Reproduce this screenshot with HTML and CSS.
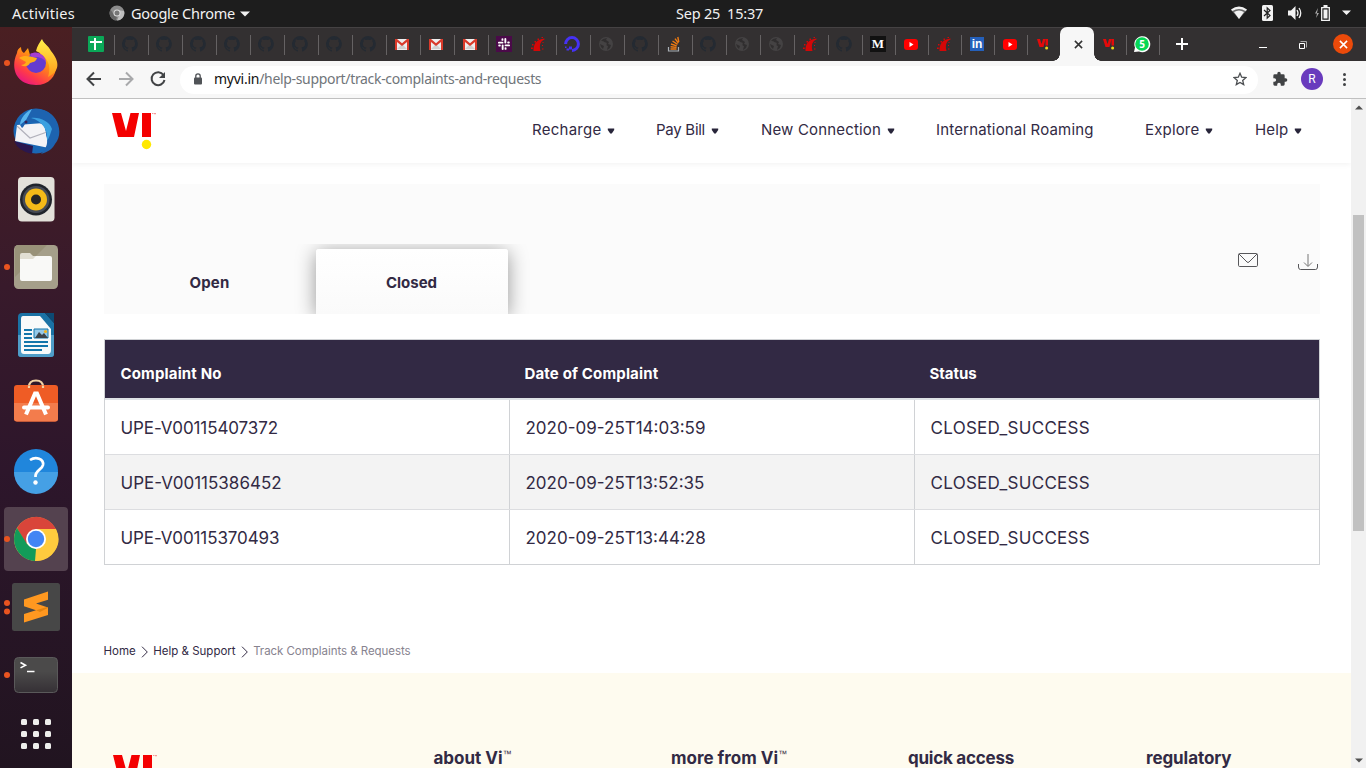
FILE: index.html
```html
<!DOCTYPE html>
<html lang="en">
<head>
<meta charset="utf-8">
<title>Track Complaints</title>
<link rel="stylesheet" href="styles.css">
</head>
<body>
<svg class="defs" aria-hidden="true">
  <symbol id="github" viewBox="0 0 16 16"><path fill="#242a32" d="M8 0a8 8 0 0 0-2.500 15.600c.4.1.5-.2.5-.4v-1.500c-2.200.5-2.700-.9-2.700-.9-.4-.9-.9-1.200-.9-1.200-.7-.5.1-.5.1-.5.8.1 1.200.8 1.200.8.7 1.200 1.900.9 2.300.7.1-.5.3-.9.5-1.100-1.800-.2-3.600-.9-3.600-4 0-.9.3-1.600.8-2.100-.1-.2-.4-1 .1-2.100 0 0 .7-.2 2.200.8a7.600 7.600 0 0 1 4 0c1.500-1 2.200-.8 2.200-.8.4 1.100.2 1.900.1 2.100.5.6.8 1.300.8 2.100 0 3.100-1.900 3.700-3.700 3.900.3.3.6.8.6 1.500v2.200c0 .2.1.5.6.4A8 8 0 0 0 8 0z"/></symbol>
  <symbol id="gmail" viewBox="0 0 16 16"><path fill="#eee" d="M1 3h14v11H1z"/><path fill="#d0d0d0" d="M3 13l5-5 5 5z"/><path fill="#d93a2b" d="M1 3h2l5 4.300L13 3h2v11h-2V6L8 10 3 6v8H1z"/></symbol>
  <symbol id="slack" viewBox="0 0 16 16"><path fill="#4a0a49" d="M0 0h16v16H0z"/><g fill="#fff"><rect x="2" y="5.700" width="5.400" height="1.900" rx=".9"/><rect x="5.500" y="2.200" width="1.900" height="2.600" rx=".9"/><rect x="8.400" y="2" width="1.900" height="5.400" rx=".9"/><rect x="11.200" y="5.500" width="2.600" height="1.900" rx=".9"/><rect x="8.600" y="8.400" width="5.400" height="1.900" rx=".9"/><rect x="8.600" y="11.200" width="1.900" height="2.600" rx=".9"/><rect x="5.700" y="8.600" width="1.900" height="5.400" rx=".9"/><rect x="2.200" y="8.600" width="2.600" height="1.900" rx=".9"/></g></symbol>
  <symbol id="rails" viewBox="0 0 16 16"><path fill="#d40707" d="M3.500 15c-.5-7 3.500-12 11-12.500v1C10.500 5 9 9 10.500 15zM1 11.500h1.800V13H1zM2 8h1.500v1.500H2zM4.500 5H6v1.500H4.500zM7.500 2.500H9V4H7.500zM11.500 1H13v1h-1.500zM12 9h1v1h-1zM12 12.500h1.500v1H12zM12.500 6h1v1h-1z"/></symbol>
  <symbol id="ocean" viewBox="0 0 16 16"><path fill="none" stroke="#4632f5" stroke-width="3" d="M8 14.400A6.400 6.400 0 1 0 1.600 8"/><path fill="#4632f5" d="M5 10.500h3v3H5zM2.500 12.500H5v2H2.500zM1 10.500h1.500V12H1z"/></symbol>
  <symbol id="globe" viewBox="0 0 16 16"><circle cx="8" cy="8" r="7" fill="#444243"/><path fill="#302e2f" d="M3 5c3-.5 3 1.500 5 1.500S7 10 10 10l-1 4 3-2 1-3-3-1 1-2-3-2 1-2-4 1zM2 8l4 2-1 3-2-2z"/></symbol>
  <symbol id="overflow" viewBox="0 0 16 16"><path fill="none" stroke="#a9afb5" stroke-width="1.200" d="M2.500 11v4h10v-4"/><path stroke="#f07b12" stroke-width="1.400" d="M4.500 13h6M4.600 10.700l6 .7M5 8l5.700 1.800M6.500 5l5 3.400M9 2.600l3.400 4.600M11.800 1l1 5"/></symbol>
  <symbol id="youtube" viewBox="0 0 16 16"><rect x="1" y="3" width="14" height="11" rx="3" fill="#f00"/><path fill="#fff" d="M6.500 6v5L10.500 8.500z"/></symbol>
  <symbol id="vi" viewBox="0 0 44 38"><path fill="#f40000" d="M0 0h9l5 18L18.500 0H27l-5 24H6zM30 0h9v24h-9z"/><circle cx="34.500" cy="31.500" r="4.700" fill="#ffe800"/><path fill="#f69a9a" d="M40 0h1.500v1H40zM42 0h2v1.200h-2z"/></symbol>
  <symbol id="vismall" viewBox="0 0 16 16"><path fill="#e30a0a" d="M2 3h3l1.500 5L8 3h2.500L8.500 11h-4zM10.500 3H13v6.500h-2.500z"/><circle cx="11.600" cy="12" r="1.500" fill="#ebd914"/></symbol>
  <symbol id="close" viewBox="0 0 10 10"><path stroke="currentColor" stroke-width="1.700" d="M1 1l8 8M9 1L1 9"/></symbol>
  <symbol id="caret" viewBox="0 0 8 6"><path fill="#28253a" d="M.8.5h6.400V2L4.800 5.500H3.200L.8 2z"/></symbol>
  <symbol id="chev" viewBox="0 0 8 12"><path fill="none" stroke="#322a44" d="M1 .7L6.300 6 1 11.300"/></symbol>
</svg>

<header class="topbar">
  <span class="activities">Activities</span>
  <svg class="app-icon" viewBox="0 0 16 16"><circle cx="8" cy="8" r="7.500" fill="#8c8c8c"/><path fill="#bebebe" d="M15 6a7.500 7.500 0 0 1-7 9.500L11.200 8 8 5z"/><path fill="#666" d="M1.500 4.500L5 10l3 1.500-1 4A7.500 7.500 0 0 1 1.500 4.500z"/><circle cx="8" cy="8" r="3.500" fill="#ddd"/><circle cx="8" cy="8" r="2.500" fill="#777"/></svg>
  <span class="appname">Google Chrome</span>
  <svg class="tri" viewBox="0 0 10 6"><path fill="#f2f2f2" d="M0 .5h10L5 5.500z"/></svg>
  <span class="clock">Sep 25&nbsp; 15:37</span>
  <svg class="tray" viewBox="0 0 130 20"><path fill="#6a6a6a" d="M1 7Q9 1 17 7L9 16z"/><path fill="#f2f2f2" d="M1 6.500Q9 .5 17 6.500L15.500 8Q9 3.800 2.500 8zM4 9Q9 6 14 9L9 16z"/><rect x="32" y="2" width="11" height="16" rx="1.500" fill="#f2f2f2"/><path fill="none" stroke="#222" stroke-width="1.200" d="M34 7l6 5.500-2.800 2.700V4.800L40 7.500 34 13"/><path fill="#f2f2f2" d="M58 7.500h3L65.500 3v14L61 12.500h-3z"/><path fill="none" stroke="#f2f2f2" stroke-width="1.300" d="M67 7q2 3 0 6M69 5q3.500 5 0 10"/><path fill="#aaa" d="M88 5l-3 5.500h2L86 15l3-5h-2z"/><path fill="none" stroke="#f2f2f2" stroke-width="1.300" d="M91.700 4.700h7.600v12.600h-7.600z"/><path fill="#f2f2f2" d="M93.500 6.500h4v9h-4zM93.500 2h4v2h-4zM112 7.500h9L116.500 12z"/></svg>
</header>

<div class="desktop">
  <nav class="dock">
    <div class="app one"><svg viewBox="0 0 48 48"><defs><linearGradient id="ff" x1=".8" y1="0" x2=".2" y2="1"><stop offset="0" stop-color="#fff44f"/><stop offset=".4" stop-color="#ff980e"/><stop offset=".75" stop-color="#ff3b48"/><stop offset="1" stop-color="#e3108d"/></linearGradient><linearGradient id="fy" x1="0" y1="0" x2="0" y2="1"><stop offset="0" stop-color="#fff14a"/><stop offset="1" stop-color="#ff9a1a"/></linearGradient></defs><path fill="url(#ff)" d="M29 1c5 5 7 7 9 11 12 13 6 34-14 34C4 46-2 29 5 14c0-3 2-5 4-6 0 3 1 5 3 6l4-5 2 7c5-1 8-1 10 0z"/><circle cx="24" cy="24" r="10" fill="#643bd0"/><path fill="#a53ed2" d="M18 15c7-4 15 0 16 8-4-5-7-5-14-5z"/><path fill="url(#fy)" d="M24 12c1-5 4-9 6-12 2 5 6 6 9 12 9 11 9 20-3 26 4-12-1-21-12-26z"/><path fill="#ffad18" d="M7 19c5-3 9-2 18 0-1 4-4 4-7 5-2 4-6 4-9 2 4 0 5-3 5-3z"/></svg></div>
    <div class="app"><svg viewBox="0 0 48 48"><circle cx="24" cy="24" r="22.500" fill="#1a67b5"/><path fill="#2a174f" d="M2 34l19 5-1 8Q6 44 2 34z"/><path fill="#f3f3f6" d="M5 18l27-2 5 25L3 34z"/><path fill="none" stroke="#b1b1bb" stroke-width="1.200" d="M5 19l13 12 17-6"/><path fill="#1d63b0" d="M8 18C8 6 20-2 34 4c12 5 18 22 9 33-3 6-8 8-14 10 7-7 7-13 5-20 1-12-10-13-19-12-3 2-3 5-5 6z"/><path fill="#3ba0e0" d="M19 11c9-1 18 3 21 11-2 6-3 9-5 12 1-12-5-20-16-23z"/><path fill="#58b5ed" d="M20 2c-6 3-12 9-12 16l6-5z"/><circle cx="14" cy="15" r="1.500" fill="#342255"/></svg></div>
    <div class="app"><svg viewBox="0 0 48 48"><rect x="6" y="2" width="36.500" height="44.500" rx="4" fill="#e3e1da"/><circle cx="24" cy="24.500" r="16" fill="#20242b"/><circle cx="24" cy="24.500" r="13.500" fill="#464b55"/><circle cx="24" cy="24.500" r="11" fill="#f4ba18"/><circle cx="24" cy="24.500" r="5" fill="#262626"/></svg></div>
    <div class="app one"><svg viewBox="0 0 48 48"><rect x="2" y="2" width="44" height="44" rx="4.500" fill="#a59f8a"/><path fill="#999279" d="M6 2h29L3 34V6q0-4 3-4z"/><path fill="#e1ded3" d="M8 12q0-2 2-2h8l3 3h3v5H8z"/><path fill="#f9f9f7" d="M8 16h13l3-3h14q2 0 2 2v21q0 2-2 2H10q-2 0-2-2z"/></svg></div>
    <div class="app"><svg viewBox="0 0 48 48"><path fill="#1a72a5" d="M10 2h23l9 10v31q0 3-3 3H9q-3 0-3-3V6q0-4 4-4z"/><path fill="#4f9dc8" d="M6 24h36v19q0 3-3 3H9q-3 0-3-3z"/><path fill="#0c4a74" d="M33 2h9v10z"/><path fill="#f8fafa" d="M11 5h17l11 13v21q0 4-3 4H12q-3 0-3-3V8q0-3 2-3z"/><path stroke="#1376ab" stroke-width="2" d="M12 19h8M12 23h8M12 27h8M12 31h24M12 35h24M12 39h18"/><path fill="#95c9e8" stroke="#1376ab" d="M22 18h14v9H22z"/><path fill="#3b444b" d="M23 27l4-6 3 3 2-2 4 5z"/><circle cx="33.500" cy="20.500" r="1.600" fill="#f3b31e"/></svg></div>
    <div class="app"><svg viewBox="0 0 48 48"><path fill="none" stroke="#f3d3a5" stroke-width="2.200" d="M17 9V8q0-6.500 7-6.500T31 8v1"/><rect x="2" y="6" width="44" height="36.500" rx="3" fill="#ef5c25"/><path fill="#f37c4c" d="M2 24h44v15.500q0 3-3 3H5q-3 0-3-3z"/><path fill="none" stroke="#f3d3a5" stroke-width="2.200" d="M17 9V6.500M31 9V6.500"/><path fill="none" stroke="#fff" stroke-width="4" d="M14 35.500l9-21h2l9 21"/><path stroke="#fff" stroke-width="4" stroke-linecap="round" d="M12 28.500h24"/></svg></div>
    <div class="app"><svg viewBox="0 0 48 48"><circle cx="24" cy="24" r="22" fill="#2086dc"/><path fill="#45a0e5" d="M2 25h44a22 22 0 0 1-44 0z"/><path fill="none" stroke="#fff" stroke-width="2.700" d="M18 13c6-4 14-1 13 5-1 5-8 5-7.500 12"/><circle cx="23.500" cy="35.500" r="2.200" fill="#fff"/></svg></div>
    <div class="app one active"><svg viewBox="0 0 48 48"><circle cx="24" cy="24" r="22" fill="#fecb3e"/><path fill="#d9453a" d="M5 13a22 22 0 0 1 39 1H24L14 29z"/><path fill="#129b59" d="M5 13l10 16 9 5-1 12A22 22 0 0 1 5 13z"/><path fill="#fecb3e" d="M23 46l10-17-4-15h15A22 22 0 0 1 23 46z"/><circle cx="24" cy="24" r="10" fill="#fff"/><circle cx="24" cy="24" r="8.200" fill="#4285f4"/></svg></div>
    <div class="app two"><svg viewBox="0 0 48 48"><rect width="48" height="48" rx="2.500" fill="#474747"/><path fill="#ff9820" d="M12 16.500L36 8.500v8.200L24 20.500l12 4v7.500L12 39.500V31l12-3.800-12-4z"/><path fill="#e4830f" d="M24 27.200l11-3.200.7 1-7.700 4z"/></svg></div>
    <div class="app one"><svg viewBox="0 0 48 48"><defs><linearGradient id="tm" x1="0" y1="0" x2="0" y2="1"><stop offset=".4" stop-color="#4b4a4a"/><stop offset="1" stop-color="#353035"/></linearGradient></defs><rect x="2.500" y="6.500" width="43" height="35" rx="4" fill="url(#tm)" stroke="#5a595a"/><path fill="none" stroke="#fff" stroke-width="1.600" d="M8.500 11.500l5 2.700-5 2.700M15 20.500h7.500"/></svg></div>
    <div class="grid"><i></i><i></i><i></i><i></i><i></i><i></i><i></i><i></i><i></i></div>
  </nav>

  <main class="browser">
    <div class="tabstrip">
      <div class="tab"><svg viewBox="0 0 16 16"><rect width="16" height="16" rx="1" fill="#0aa858"/><path stroke="#fff" stroke-width="2" d="M2 6h12M7 2v12"/></svg></div>
      <div class="tab"><svg><use href="#github"/></svg></div><div class="tab"><svg><use href="#github"/></svg></div><div class="tab"><svg><use href="#github"/></svg></div><div class="tab"><svg><use href="#github"/></svg></div><div class="tab"><svg><use href="#github"/></svg></div><div class="tab"><svg><use href="#github"/></svg></div><div class="tab"><svg><use href="#github"/></svg></div><div class="tab"><svg><use href="#github"/></svg></div>
      <div class="tab"><svg><use href="#gmail"/></svg></div><div class="tab"><svg><use href="#gmail"/></svg></div><div class="tab"><svg><use href="#gmail"/></svg></div>
      <div class="tab"><svg><use href="#slack"/></svg></div><div class="tab"><svg><use href="#rails"/></svg></div><div class="tab"><svg><use href="#ocean"/></svg></div><div class="tab"><svg><use href="#globe"/></svg></div><div class="tab"><svg><use href="#github"/></svg></div><div class="tab"><svg><use href="#overflow"/></svg></div><div class="tab"><svg><use href="#github"/></svg></div><div class="tab"><svg><use href="#globe"/></svg></div><div class="tab"><svg><use href="#globe"/></svg></div><div class="tab"><svg><use href="#rails"/></svg></div><div class="tab"><svg><use href="#github"/></svg></div>
      <div class="tab n medium"><b>M</b></div><div class="tab n"><svg><use href="#youtube"/></svg></div><div class="tab n"><svg><use href="#rails"/></svg></div><div class="tab n linkedin"><b>in</b></div><div class="tab n"><svg><use href="#youtube"/></svg></div>
      <div class="tab last"><svg><use href="#vismall"/></svg></div>
      <div class="tab-active"><svg><use href="#close"/></svg></div>
      <div class="tab n"><svg><use href="#vismall"/></svg></div>
      <div class="tab n"><svg viewBox="0 0 16 16"><path fill="#fff" d="M0 16L1 11.500A8 8 0 1 1 5 15.500z"/><circle cx="8" cy="8" r="6.800" fill="#06d755"/><text class="badge" x="8" y="11.800" text-anchor="middle">5</text></svg></div>
      <svg class="plus" viewBox="0 0 12 12"><path stroke="#fff" stroke-width="2" d="M6 0v12M0 6h12"/></svg>
      <svg class="min" viewBox="0 0 8 10"><path stroke="#fff" d="M0 7.500h8"/></svg>
      <svg class="max" viewBox="0 0 10 10"><path stroke="#aaa" fill="none" d="M2.500 1.500h6v6"/><path stroke="#fff" fill="none" d="M1.500 3.500h5v5h-5z"/></svg>
      <span class="quit"><svg><use href="#close"/></svg></span>
    </div>

    <div class="toolbar">
      <svg class="tool" viewBox="0 0 20 20"><path fill="none" stroke="#414345" stroke-width="2" d="M17 10H4M10 3.500L3.500 10l6.500 6.500"/></svg>
      <svg class="tool" viewBox="0 0 20 20"><path fill="none" stroke="#a8a9ab" stroke-width="2" d="M3 10h13M10 3.500l6.500 6.500-6.500 6.500"/></svg>
      <svg class="tool" viewBox="0 0 20 20"><path fill="none" stroke="#414345" stroke-width="2" d="M15.500 6A6.500 6.500 0 1 0 16.500 11"/><path fill="#414345" d="M17 3v6h-6z"/></svg>
      <div class="omnibox">
        <svg class="lock" viewBox="0 0 8 12"><rect y="4.500" width="8" height="7" rx="1" fill="#505357"/><path fill="none" stroke="#505357" stroke-width="1.300" d="M1.800 5V3a2.200 2.200 0 0 1 4.400 0v2"/></svg>
        <div class="url"><span class="host">myvi.in</span><span class="path">/help-support/track-complaints-and-requests</span></div>
        <svg class="star" viewBox="0 0 14 14"><path fill="none" stroke="#4c4f52" stroke-width="1.300" d="M7 1.300l1.700 3.900 4.200.4-3.200 2.800 1 4.200L7 10.400l-3.700 2.200 1-4.200L1.100 5.600l4.200-.4z"/></svg>
      </div>
      <svg class="puzzle" viewBox="0 0 24 24"><path fill="#414345" d="M20.500 11H19V7a2 2 0 0 0-2-2h-4V3.500a2.500 2.500 0 0 0-5 0V5H4a2 2 0 0 0-2 2v3.800h1.500a2.700 2.700 0 0 1 0 5.400H2V20a2 2 0 0 0 2 2h3.800v-1.500a2.700 2.700 0 0 1 5.400 0V22H17a2 2 0 0 0 2-2v-4h1.500a2.500 2.500 0 0 0 0-5z"/></svg>
      <span class="avatar">R</span>
      <span class="dots"><i></i><i></i><i></i></span>
    </div>

    <div class="viewport">
      <div class="page">
        <header class="site-header">
          <svg class="logo"><use href="#vi"/></svg>
          <nav class="menu">
            <a><span class="recharge">Recharge</span><svg><use href="#caret"/></svg></a>
            <a><span class="paybill">Pay Bill</span><svg><use href="#caret"/></svg></a>
            <a><span>New Connection</span><svg><use href="#caret"/></svg></a>
            <a><span>International Roaming</span></a>
            <a><span>Explore</span><svg><use href="#caret"/></svg></a>
            <a><span>Help</span><svg><use href="#caret"/></svg></a>
          </nav>
        </header>

        <section class="panel">
          <div class="switch">
            <div class="opt"><span>Open</span></div>
            <div class="opt sel"><span>Closed</span></div>
          </div>
          <div class="actions">
            <svg class="mail" viewBox="0 0 20 14"><rect x=".5" y=".5" width="19" height="13" rx="1.200" fill="none" stroke="#57575a"/><path fill="none" stroke="#57575a" d="M1 1l8 8q1 1 2 0l8-8"/></svg>
            <svg class="down" viewBox="0 0 20 16"><path fill="none" stroke="#57575a" d="M.5 10v3q0 2.500 2 2.500h15q2 0 2-2.500v-3"/><path fill="none" stroke="#777" d="M10 0v12M6 8.500l4 4 4-4"/></svg>
          </div>
        </section>

        <div class="table">
          <div class="thead"><span>Complaint No</span><span>Date of Complaint</span><span class="status-head">Status</span></div>
          <div class="row"><span class="tight">UPE-V00115407372</span><span>2020-09-25T14:03:59</span><span class="status">CLOSED_SUCCESS</span></div>
          <div class="row alt"><span>UPE-V00115386452</span><span>2020-09-25T13:52:35</span><span class="status">CLOSED_SUCCESS</span></div>
          <div class="row"><span class="tight">UPE-V00115370493</span><span>2020-09-25T13:44:28</span><span class="status">CLOSED_SUCCESS</span></div>
        </div>

        <div class="crumbs">
          <span>Home</span><svg><use href="#chev"/></svg><span>Help &amp; Support</span><svg><use href="#chev"/></svg><span class="current">Track Complaints &amp; Requests</span>
        </div>

        <footer class="footer">
          <svg class="logo"><use href="#vi"/></svg>
          <h4>about Vi<sup>™</sup></h4>
          <h4>more from Vi<sup>™</sup></h4>
          <h4 class="quick">quick access</h4>
          <h4 class="regulatory">regulatory</h4>
        </footer>
      </div>
      <div class="scrollbar"><svg viewBox="0 0 8 5"><path fill="#505050" d="M0 4.500h8L4 .5z"/></svg><div class="thumb"></div><svg viewBox="0 0 8 5"><path fill="#505050" d="M0 .5h8L4 4.500z"/></svg></div>
    </div>
  </main>
</div>
</body>
</html>
```
FILE: styles.css
```css
* { box-sizing: border-box; }
body { margin: 0; width: 1366px; height: 768px; overflow: hidden; font-family: Inter, sans-serif; color: #322a44; }
svg { display: block; flex: none; }
.defs { position: absolute; width: 0; height: 0; }
.topbar { display: flex; align-items: center; height: 27px; padding: 0 0 1px 12px; background: #1d1d1d; color: #f2f2f2; font: 14.500px "Noto Sans", sans-serif; white-space: nowrap; }
.activities { letter-spacing: .258px; }
.app-icon { width: 16px; height: 16px; margin: 0 6px 0 34px; }
.appname { letter-spacing: -.234px; }
.tri { width: 10px; height: 6px; margin: 1px 0 0 5px; }
.clock { margin-left: 426px; letter-spacing: -.232px; }
.tray { width: 130px; height: 20px; margin: 0 6px 0 auto; }
.desktop { display: flex; height: 741px; }
.dock { width: 72px; padding-top: 2px; background: linear-gradient(#4a1f22, #381a2b 35%, #2d162b 60%, #211420); }
.app { position: relative; height: 68px; padding: 10px 12px; }
.app > svg { width: 48px; height: 48px; }
.one::before, .two::before { content: ""; position: absolute; left: 4px; top: 31px; width: 6px; height: 6px; border-radius: 50%; background: #e95420; }
.two::before { top: 27px; box-shadow: 0 8.500px #e95420; }
.active { margin: 2px 4px; height: 64px; padding: 8px; border-radius: 4px; background: #54424f; }
.active::before { left: 0; top: 29px; }
.grid { display: grid; grid-template-columns: repeat(3, 6px); gap: 6px; padding: 10px 21px; }
.grid i { height: 6px; border-radius: 1.500px; background: #eeeeec; }
.browser { flex: 1; }
.tabstrip { display: flex; align-items: center; height: 34px; padding-left: 9px; background: #333031; border-top: 1px solid #454243; }
.tab { width: 34px; height: 20px; padding: 1px 0 0 7px; border-right: 1px solid #656263; }
.tab svg { width: 16px; height: 16px; overflow: visible; }
.tab.n { width: 33px; }
.tab.last { width: 32px; border: 0; }
.tab-active { position: relative; display: grid; place-items: center; width: 34px; height: 34px; margin-top: -1px; border-radius: 7px 7px 0 0; background: #f7f7f7; color: #333; }
.tab-active svg { width: 9px; height: 9px; margin-left: 2px; }
.tab-active::before, .tab-active::after { content: ""; position: absolute; bottom: 0; left: -7px; width: 7px; height: 7px; background: radial-gradient(circle at 0 0, transparent 6.500px, #f7f7f7 7px); }
.tab-active::after { left: auto; right: -7px; background: radial-gradient(circle at 100% 0, transparent 6.500px, #f7f7f7 7px); }
.tab b { display: block; width: 16px; height: 16px; color: #fff; text-align: center; }
.medium b { background: #111; font: bold 13px/16px "Liberation Serif", serif; }
.linkedin b { width: 14px; height: 14px; margin: 1px; background: #2560ba; font: bold 12px/14px "Liberation Sans", sans-serif; }
.badge { fill: #fff; font: bold 10px "Noto Sans", sans-serif; }
.plus { width: 12px; height: 12px; margin: -1px 0 0 16px; }
.min { width: 8px; height: 10px; margin-left: 71px; }
.max { width: 10px; height: 10px; margin-left: 31px; }
.quit { display: grid; place-items: center; width: 20px; height: 20px; margin: -1px 0 0 25px; border-radius: 50%; background: #eb4a0a; color: #fff; }
.quit svg { width: 9px; height: 9px; }
.toolbar { display: flex; align-items: center; height: 38px; padding: 0 14px 1px 12px; background: #f7f7f7; border-bottom: 1px solid #c0c0c0; }
.tool { width: 20px; height: 20px; margin-right: 12px; }
.omnibox { display: flex; align-items: center; width: 1078px; height: 28px; padding: 0 11px 0 14px; border-radius: 14px; background: #fff; margin-top: 1px; }
.lock { width: 8px; height: 12px; margin: -2px 12px 0 0; }
.url { flex: 1; margin-top: -2px; white-space: nowrap; color: #70757a; font: 14px "Noto Sans", sans-serif; }
.host { color: #111; letter-spacing: -.25px; }
.path { letter-spacing: -.331px; }
.star { width: 14px; height: 14px; margin-top: -2px; }
.puzzle { width: 16px; height: 16px; margin-left: 14px; }
.avatar { width: 22px; height: 22px; margin-left: 13px; border-radius: 50%; background: #693bbd; color: #fff; font: 12px/22px Roboto, sans-serif; text-align: center; }
.dots { display: grid; gap: 2px; margin-left: 20px; }
.dots i { width: 3px; height: 3px; border-radius: 50%; background: #414345; }
.viewport { display: flex; height: 669px; }
.page { width: 1279px; background: #fff; overflow: hidden; }
.site-header { display: flex; height: 64px; padding: 14px 0 0 40px; box-shadow: 0 1px 6px rgba(0,0,0,.06); }
.logo { width: 44px; height: 38px; }
.menu { display: grid; grid-template-columns: 124px 105px 175px 209px 110px 60px; margin-left: 376px; height: 32px; font-size: 15px; letter-spacing: .17px; }
.menu a { display: flex; align-items: center; white-space: nowrap; }
.menu svg { width: 8px; height: 6px; margin: 3px 0 0 5.500px; }
.recharge { letter-spacing: .264px; }
.paybill { letter-spacing: -.27px; }
.panel { display: flex; justify-content: space-between; height: 130px; margin: 21px 31px 0 32px; background: #fbfbfb; }
.switch { display: flex; align-self: flex-end; height: 70px; padding: 5px 30px 0 10px; overflow: hidden; font-size: 15px; font-weight: 700; }
.opt { display: flex; justify-content: center; width: 192px; height: 65px; padding: 24px 1px 0 0; line-height: 20px; }
.opt:first-child { margin-right: 10px; letter-spacing: .17px; }
.sel { border-radius: 3px 3px 0 0; background: linear-gradient(#fff, #fafafa); box-shadow: 0 3px 20px rgba(0,0,0,.4); }
.actions { display: flex; gap: 40px; padding: 69px 2px 0 0; }
.mail { width: 20px; height: 14px; }
.down { width: 20px; height: 16px; margin-top: 1px; }
.table { width: 1216px; margin: 25px 0 0 32px; border: 1px solid #d0d2d5; font-size: 17px; }
.thead, .row { display: grid; grid-template-columns: 405px 405px 404px; }
.thead { height: 60px; padding-top: 9px; align-items: center; background: #322944; color: #fff; border-bottom: 2px solid #dee2e6; font-size: 15px; font-weight: 700; letter-spacing: .155px; }
.thead span { padding-left: 15.500px; }
.thead span + span { padding-left: 14.500px; }
.thead .status-head { letter-spacing: -.05px; }
.row { height: 55px; border-bottom: 1px solid #dcdde0; }
.row:last-child { height: 54px; border: 0; }
.row span { display: flex; align-items: center; padding-left: 15.500px; padding-top: 1px; border-right: 1px solid #d0d2d5; }
.row span:last-child { border: 0; }
.row .tight { letter-spacing: -.095px; }
.row .status { letter-spacing: .289px; }
.alt { background: #f3f3f3; }
.crumbs { display: flex; align-items: center; height: 16px; margin: 78px 0 0 31.500px; font-size: 11.500px; white-space: nowrap; }
.crumbs svg { width: 8px; height: 12px; margin: 1px 4.500px 0 5px; }
.current { color: #87838f; letter-spacing: -.047px; }
.footer { display: grid; grid-template-columns: 320.500px 237.500px 237px 238px 1fr; height: 120px; margin-top: 14px; padding: 82px 0 0 41px; background: #fefbef; }
.footer h4 { display: flex; margin: -8px 0 0; font-size: 17px; line-height: 22px; font-weight: 700; white-space: nowrap; }
.footer .quick { letter-spacing: -.237px; }
.footer .regulatory { letter-spacing: -.086px; }
sup { font: 9px/14px "Liberation Sans", sans-serif; vertical-align: baseline; }
.scrollbar { display: flex; flex-direction: column; align-items: center; width: 15px; padding: 6px 0 5px; background: #f1f1f1; }
.scrollbar svg { width: 8px; height: 5px; }
.thumb { width: 11px; height: 316px; margin: 105px 0 auto; background: #c1c1c1; }
```
